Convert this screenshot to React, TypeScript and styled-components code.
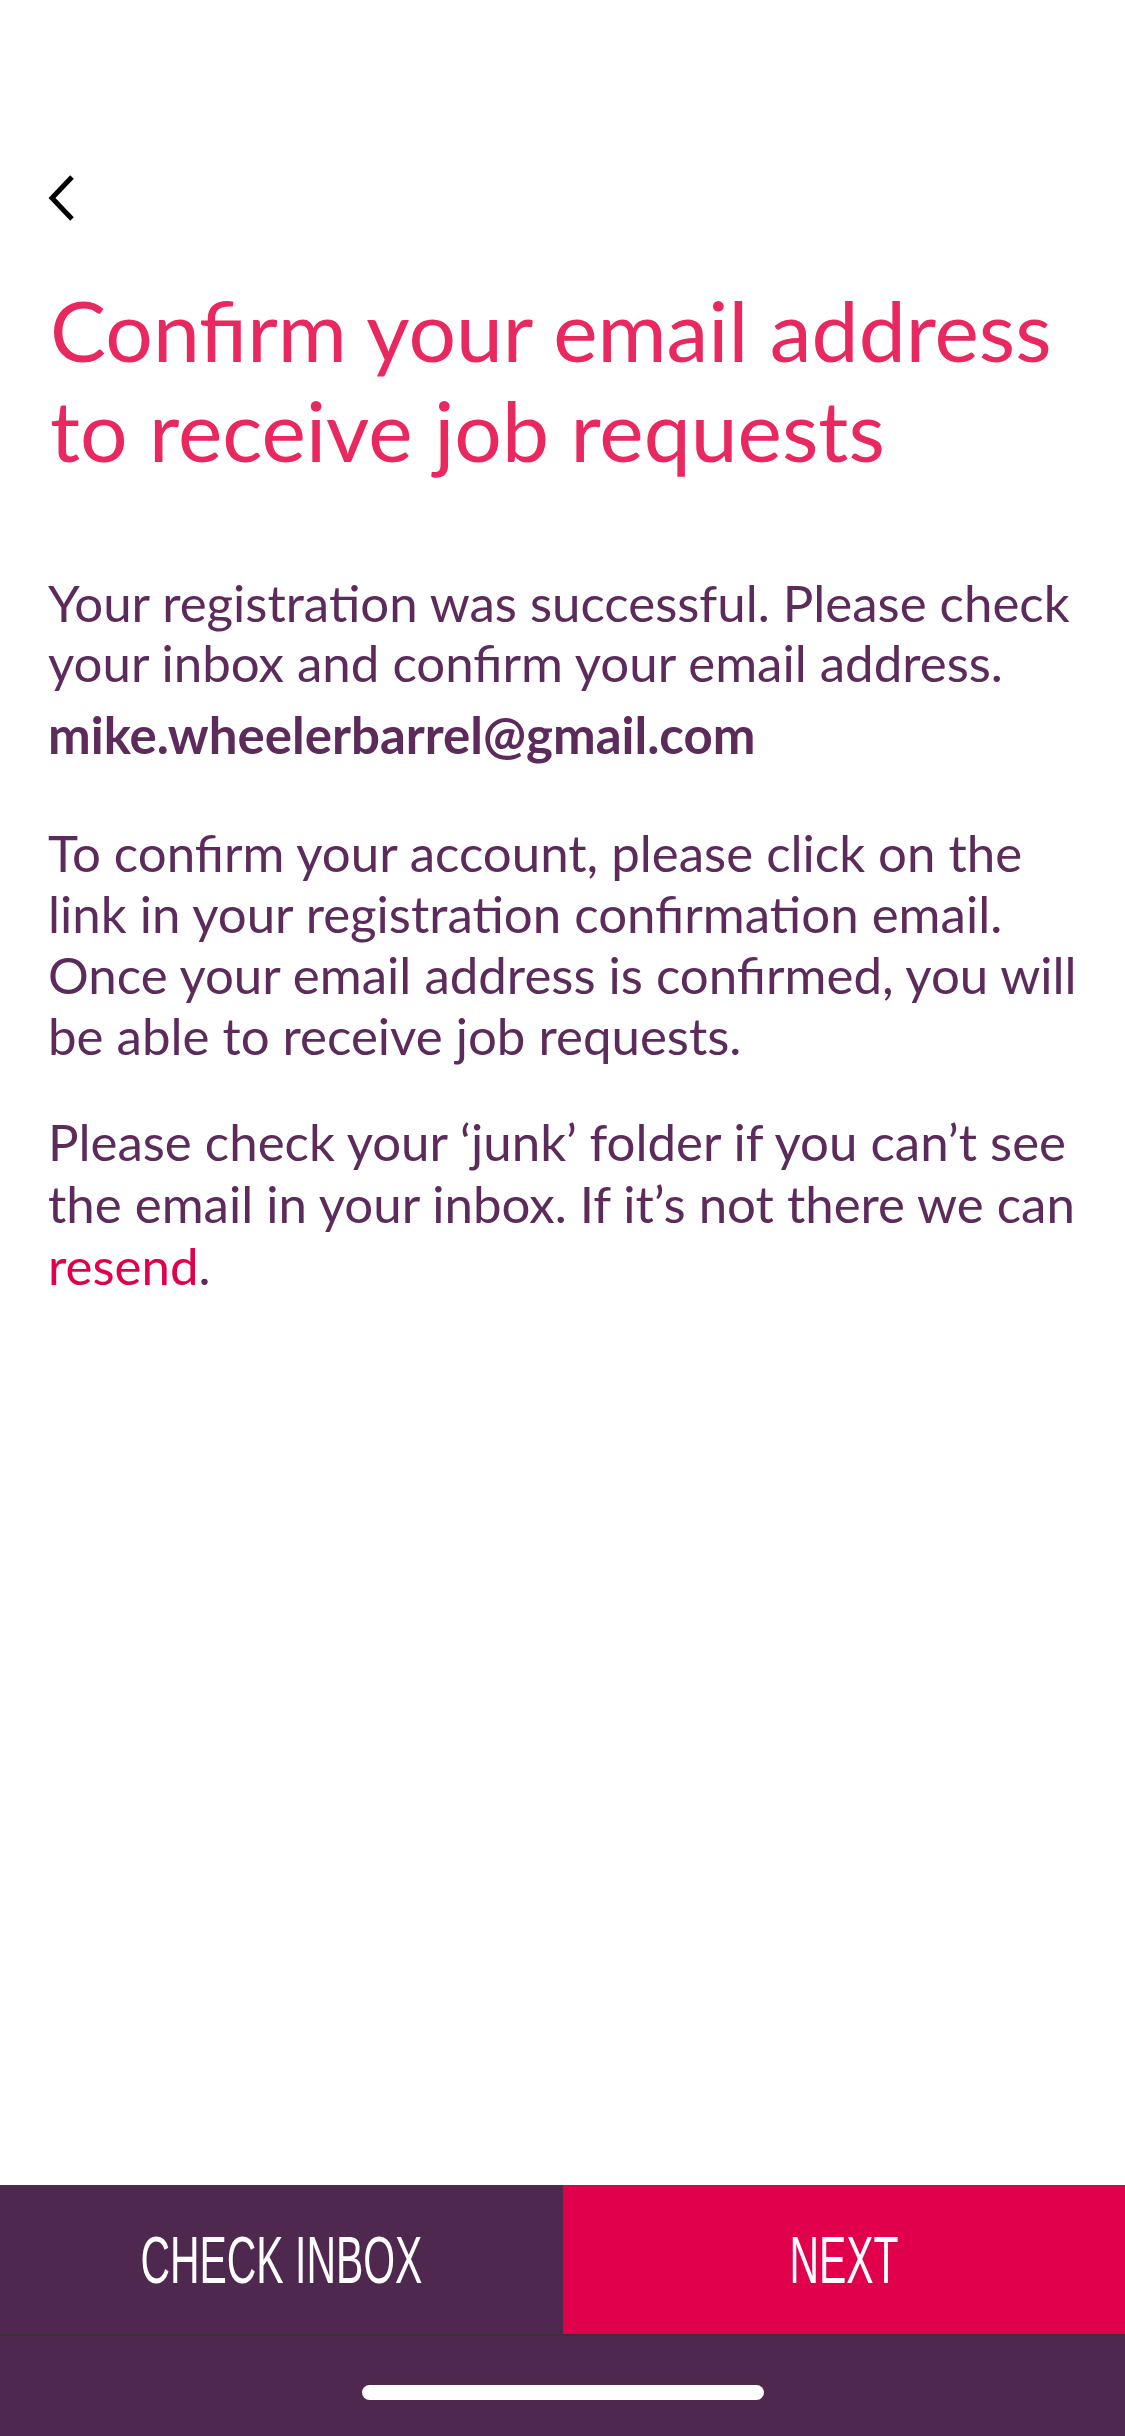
import React from "react";
import styled, { createGlobalStyle } from "styled-components";

const GlobalStyle = createGlobalStyle`
  html, body {
    margin: 0;
    padding: 0;
    background: #ffffff;
  }
  body {
    font-family: Lato, "Open Sans", sans-serif;
  }
  * { box-sizing: border-box; }
`;

const Screen = styled.div`
  width: 1125px;
  min-height: 2436px;
  display: flex;
  flex-direction: column;
  background: #ffffff;
`;

const Content = styled.main`
  flex: 1;
  display: flex;
  flex-direction: column;
  padding: 175px 30px 0 48px;
`;

const BackButton = styled.button`
  width: 30px;
  height: 46px;
  padding: 0;
  margin: 0;
  border: none;
  background: transparent;
  display: flex;
  align-items: center;
  justify-content: flex-start;
  cursor: pointer;
`;

const Title = styled.h1`
  margin: 59px 0 0 2px;
  font-family: Lato, sans-serif;
  font-weight: 400;
  font-size: 84px;
  line-height: 100px;
  color: #e8285f;
  letter-spacing: 0;
`;

const Paragraph = styled.p<{ $top: number; $lh: number; $bold?: boolean }>`
  margin: ${(p) => p.$top}px 0 0 0;
  font-family: Lato, sans-serif;
  font-weight: ${(p) => (p.$bold ? 700 : 400)};
  font-size: 51px;
  line-height: ${(p) => p.$lh}px;
  color: #5c2b5b;
`;

const Link = styled.a`
  color: #e0004d;
  text-decoration: none;
`;

const Footer = styled.footer`
  display: flex;
  flex-direction: column;
  background: #4f2850;
`;

const ButtonRow = styled.div`
  display: grid;
  grid-template-columns: 1fr 1fr;
  height: 151px;
  border-bottom: 2px solid #3a3039;
`;

const ActionButton = styled.button<{ $primary?: boolean }>`
  border: none;
  margin: 0;
  padding: 0;
  background: ${(p) => (p.$primary ? "#e0004c" : "#4f2850")};
  color: #ffffff;
  display: flex;
  align-items: center;
  justify-content: center;
  cursor: pointer;
`;

const ButtonLabel = styled.span`
  display: inline-block;
  font-family: "Liberation Sans Narrow", "Liberation Sans", sans-serif;
  font-weight: 400;
  font-size: 66px;
  line-height: 1;
  letter-spacing: 0;
  transform: scaleX(0.62);
  transform-origin: center;
  white-space: nowrap;
`;

const HomeArea = styled.div`
  height: 100px;
  display: flex;
  align-items: center;
  justify-content: center;
  padding-top: 12px;
`;

const HomeIndicator = styled.div`
  width: 402px;
  height: 15px;
  border-radius: 8px;
  background: #ffffff;
`;

export default function App() {
  return (
    <Screen>
      <GlobalStyle />
      <Content>
        <BackButton aria-label="Back">
          <svg width="30" height="46" viewBox="0 0 30 46" fill="none">
            <path
              d="M24 2 L4 23 L24 44"
              stroke="#000000"
              strokeWidth="5"
              strokeLinecap="butt"
              strokeLinejoin="miter"
            />
          </svg>
        </BackButton>
        <Title>
          Confirm your email address
          <br />
          to receive job requests
        </Title>
        <Paragraph $top={93} $lh={60}>
          Your registration was successful. Please check your inbox and confirm
          your email address.
        </Paragraph>
        <Paragraph $top={12} $lh={60} $bold>
          mike.wheelerbarrel@gmail.com
        </Paragraph>
        <Paragraph $top={57} $lh={61}>
          To confirm your account, please click on the link in your registration
          confirmation email. Once your email address is confirmed, you will be
          able to receive job requests.
        </Paragraph>
        <Paragraph $top={45} $lh={62}>
          Please check your ‘junk’ folder if you can’t see the email in your
          inbox. If it’s not there we can <Link href="#">resend</Link>.
        </Paragraph>
      </Content>
      <Footer>
        <ButtonRow>
          <ActionButton>
            <ButtonLabel>CHECK INBOX</ButtonLabel>
          </ActionButton>
          <ActionButton $primary>
            <ButtonLabel>NEXT</ButtonLabel>
          </ActionButton>
        </ButtonRow>
        <HomeArea>
          <HomeIndicator />
        </HomeArea>
      </Footer>
    </Screen>
  );
}
